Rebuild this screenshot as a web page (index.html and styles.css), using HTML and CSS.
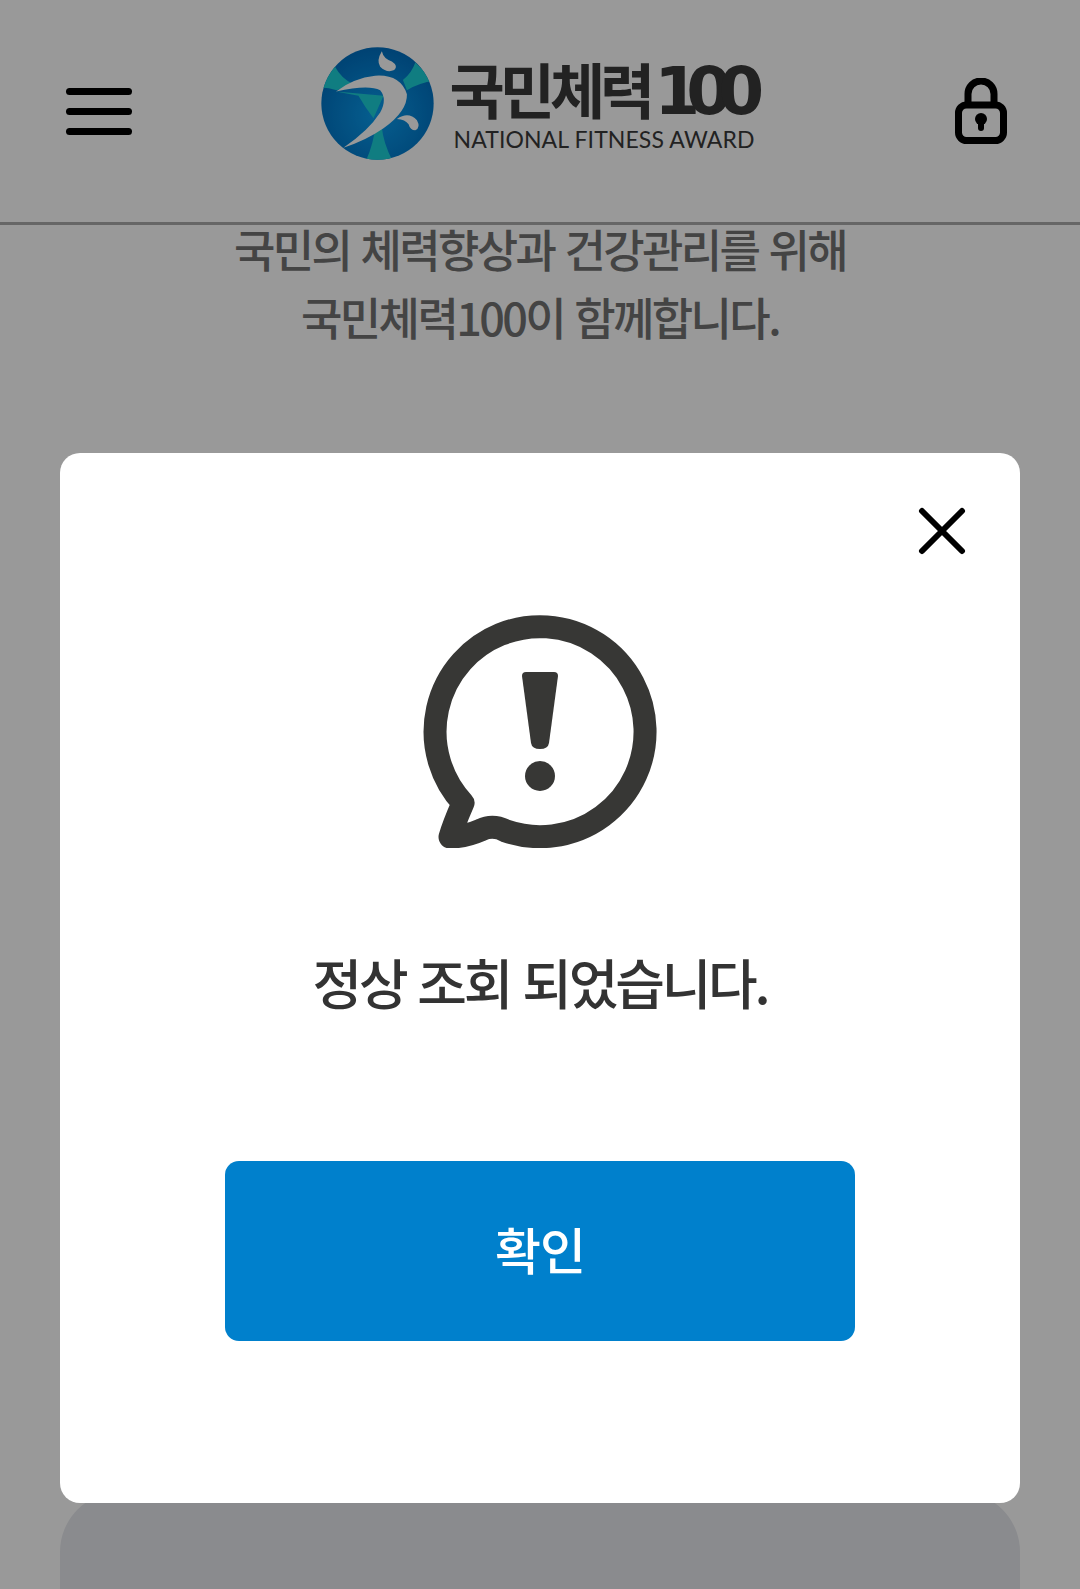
FILE: index.html
```html
<!DOCTYPE html>
<html lang="ko">
<head>
<meta charset="utf-8">
<title>국민체력100</title>
<link rel="stylesheet" href="styles.css">
</head>
<body>
<header class="site-header">
  <button class="menu-btn" aria-label="메뉴"><span></span><span></span><span></span></button>
  <a class="logo">
    <svg class="logo-mark" viewBox="63 50 338 336" aria-hidden="true">
      <defs>
        <radialGradient id="globe" cx="50%" cy="60%" r="60%">
          <stop offset="0" stop-color="#0a9ef0"/>
          <stop offset="1" stop-color="#006fc0"/>
        </radialGradient>
        <clipPath id="disc"><circle cx="232" cy="218" r="168"/></clipPath>
      </defs>
      <circle cx="232" cy="218" r="168" fill="url(#globe)"/>
      <g clip-path="url(#disc)" fill="#1cd0d8">
        <path d="M60 150 L105 108 Q125 145 160 160 L110 178 Q85 170 60 170Z"/>
        <path d="M345 95 L400 150 Q360 155 320 178 L308 148 Q335 125 345 95Z"/>
        <path d="M108 182 L250 195 L220 262 Q195 230 175 195Z"/>
        <path d="M225 290 L245 290 Q250 340 280 395 L195 395 Q220 340 225 290Z"/>
      </g>
      <path fill="#fff" d="M108 182 Q160 142 225 135 Q300 130 320 190 Q322 240 250 292 Q195 330 130 350 Q205 300 240 245 Q262 205 240 178 Q205 160 108 182Z"/>
      <path fill="#fff" d="M245 62 Q228 90 240 108 Q260 128 282 118 Q295 105 275 92 Q250 85 245 62Z"/>
      <path fill="#fff" d="M290 264 Q325 240 350 268 Q362 290 345 298 Q330 298 325 280 Q315 265 290 264Z"/>
    </svg>
    <span class="logo-text">
      <span class="logo-title"><span class="logo-ko">국민체력</span><span class="logo-num">100</span></span>
      <span class="logo-sub">NATIONAL FITNESS AWARD</span>
    </span>
  </a>
  <button class="lock-btn" aria-label="잠금">
    <svg viewBox="0 0 52 66" width="52" height="66" aria-hidden="true">
      <path class="lock-line" d="M13 27 V16 A13 13 0 0 1 39 16 V27"/>
      <rect class="lock-line" x="3.5" y="27" width="45" height="35.5" rx="8"/>
      <circle class="lock-fill" cx="26" cy="41" r="6"/>
      <rect class="lock-fill" x="23" y="41" width="6" height="12" rx="3"/>
    </svg>
  </button>
</header>

<p class="intro">국민의 체력향상과 건강관리를 위해<br>국민체력100이 함께합니다.</p>
<section class="card"></section>

<div class="overlay">
  <div class="modal">
    <button class="close-btn" aria-label="닫기">
      <svg viewBox="0 0 50 50" width="50" height="50" aria-hidden="true"><path d="M5 5 L45 45 M45 5 L5 45"/></svg>
    </button>
    <svg class="alert-icon" viewBox="0 0 234 233" aria-hidden="true">
      <path class="alert-line" d="M40 188 A105 105 0 1 1 83 216 Q70 209 58 215 Q42 222 27 222 Q30 211 40 188Z"/>
      <path class="alert-fill" d="M99 61 Q99 57 103 57 H131 Q135 57 135 61 L126 128 Q125 134 117 134 Q109 134 108 128Z"/>
      <circle class="alert-fill" cx="117" cy="161" r="15"/>
    </svg>
    <p class="message">정상 조회 되었습니다.</p>
    <button class="confirm-btn">확인</button>
  </div>
</div>
</body>
</html>
```
FILE: styles.css
```css
* { box-sizing: border-box; }
html, body { margin: 0; height: 1589px; overflow: hidden; }
body {
  background: #fff;
  font-family: "Noto Sans CJK KR", "Noto Sans", sans-serif;
  color: #393939;
}
button { border: 0; background: none; padding: 0; font: inherit; }

.site-header {
  height: 225px;
  padding: 47px 66px 0;
  border-bottom: 3px solid #aaa;
  display: grid;
  grid-template-columns: 1fr auto 1fr;
  align-items: start;
}
.menu-btn {
  width: 66px;
  margin-top: 41px;
  display: flex;
  flex-direction: column;
  gap: 13px;
}
.menu-btn span { height: 7px; border-radius: 4px; background: #000; }
.lock-btn { justify-self: end; margin: 31px 7px 0 0; line-height: 0; }
.lock-line { fill: none; stroke: #000; stroke-width: 7; }
.lock-fill { fill: #000; }

.logo { display: flex; align-items: flex-start; gap: 16px; }
.logo-mark { width: 113px; height: 113px; display: block; }
.logo-text { display: flex; flex-direction: column; width: 310px; }
.logo-title { display: flex; align-items: center; height: 72px; margin-top: 5px; white-space: nowrap; }
.logo-ko { font-size: 60px; font-weight: 700; letter-spacing: -5px; line-height: 70px; color: #393939; }
.logo-num { font-family: "DejaVu Sans", sans-serif; font-size: 66px; font-weight: 700; letter-spacing: -14px; line-height: 58px; margin: 8px 0 0 4px; color: #393939; }
.logo-sub { font-family: "Lato", sans-serif; font-size: 23px; font-weight: 400; letter-spacing: .1px; line-height: 30px; margin: 0 0 0 4px; white-space: nowrap; color: #393939; }

.intro {
  margin: -10px 0 0;
  text-align: center;
  font-size: 45px;
  line-height: 68px;
  font-weight: 500;
  letter-spacing: -2.6px;
  color: #727272;
}
.card {
  margin: 1141px 60px 0;
  height: 97px;
  border-radius: 60px 60px 0 0;
  background: #e6e8ed;
}

.overlay {
  position: fixed;
  inset: 0;
  padding: 453px 60px 86px;
  background: rgba(0, 0, 0, .4);
}
.modal {
  height: 100%;
  padding: 53px 0 0;
  background: #fff;
  border-radius: 20px;
  display: flex;
  flex-direction: column;
  align-items: center;
  position: relative;
}
.close-btn { align-self: flex-end; margin-right: 53px; line-height: 0; height: 50px; }
.close-btn path { fill: none; stroke: #000; stroke-width: 6; stroke-linecap: round; }
.alert-icon { width: 234px; height: 233px; margin-top: 59px; display: block; }
.alert-line { fill: none; stroke: #373735; stroke-width: 23; stroke-linejoin: round; }
.alert-fill { fill: #373735; }
.message {
  margin: 95px 0 0;
  font-size: 54px;
  line-height: 78px;
  font-weight: 500;
  letter-spacing: -3.2px;
  color: #333;
}
.confirm-btn {
  width: 630px;
  height: 180px;
  margin-top: 140px;
  padding-bottom: 6px;
  border-radius: 14px;
  background: #0080cc;
  color: #fff;
  font-size: 50px;
  font-weight: 500;
  letter-spacing: -1px;
}
```
